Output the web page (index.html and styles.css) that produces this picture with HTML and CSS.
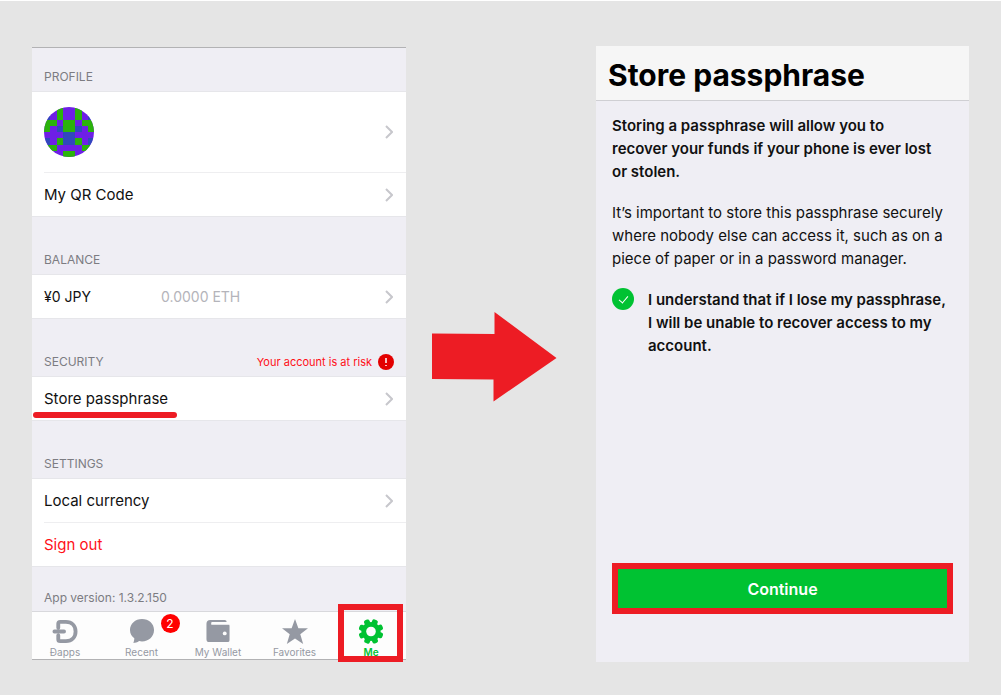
FILE: index.html
```html
<!DOCTYPE html>
<html lang="en">
<head>
    <meta charset="UTF-8">
    <meta name="viewport" content="width=device-width, initial-scale=1.0">
    <title>Store passphrase</title>
    <link rel="stylesheet" href="styles.css">
</head>
<body>
    <main class="guide">
        <!-- Step 1: account screen -->
        <section class="screen account">
            <h2 class="group-title">PROFILE</h2>
            <div class="group">
                <a href="#" class="row profile-row" aria-label="Profile">
                    <svg class="avatar" viewBox="0 0 8 8" shape-rendering="crispEdges">
                        <rect width="8" height="8" fill="#6e1fe6"/>
                        <path fill="#2bb30b" d="M2 0h1v2h-1zM5 0h1v2h-1zM0 2h2v1h-1v1h-1zM6 2h2v2h-1v-1h-1zM3 2h2v2h-2zM2 5h1v1h-1zM5 5h1v1h-1zM0 6h2v1h-2zM6 6h2v1h-2zM3 7h2v1h-2z"/>
                        <path fill="#3148bd" d="M0 1h1v1h-1zM7 1h1v1h-1zM2 3h1v1h-1zM5 3h1v1h-1zM3 4h2v2h-2zM0 5h1v1h-1zM7 5h1v1h-1z"/>
                    </svg>
                    <svg class="chevron" viewBox="0 0 8 14"><path d="M1 1l6 6-6 6"/></svg>
                </a>
                <a href="#" class="row">
                    <span>My QR Code</span>
                    <svg class="chevron" viewBox="0 0 8 14"><path d="M1 1l6 6-6 6"/></svg>
                </a>
            </div>

            <h2 class="group-title">BALANCE</h2>
            <div class="group">
                <a href="#" class="row balance-row">
                    <span class="fiat">¥0 JPY</span>
                    <span class="eth">0.0000 ETH</span>
                    <svg class="chevron" viewBox="0 0 8 14"><path d="M1 1l6 6-6 6"/></svg>
                </a>
            </div>

            <div class="group-title">
                <h2>SECURITY</h2>
                <span class="risk">Your account is at risk
                    <svg viewBox="0 0 16 16"><circle cx="8" cy="8" r="8" fill="#e30000"/><path d="M8 4v5M8 11v1" stroke="#fff" stroke-width="1.5"/></svg>
                </span>
            </div>
            <div class="group">
                <a href="#" class="row marked">
                    <span>Store passphrase</span>
                    <svg class="chevron" viewBox="0 0 8 14"><path d="M1 1l6 6-6 6"/></svg>
                </a>
            </div>

            <h2 class="group-title">SETTINGS</h2>
            <div class="group">
                <a href="#" class="row">
                    <span>Local currency</span>
                    <svg class="chevron" viewBox="0 0 8 14"><path d="M1 1l6 6-6 6"/></svg>
                </a>
                <a href="#" class="row sign-out">Sign out</a>
            </div>

            <p class="version">App version: 1.3.2.150</p>

            <nav class="tabs">
                <a href="#" class="tab">
                    <svg viewBox="0 0 28 26"><path d="M7 9V5q0-2 2-2h6c6 0 10 4 10 10s-4 10-10 10H9q-2 0-2-2v-4M3 13h10" fill="none" stroke="#9599a3" stroke-width="4" stroke-linecap="round"/></svg>
                    <span>Đapps</span>
                </a>
                <a href="#" class="tab">
                    <svg viewBox="0 0 28 26"><path d="M14 0C7 0 1.500 5 1.500 11.500c0 4 2 7 4.500 8.500 0 2-.5 3.500-1 5 2 0 4-.5 6-2 1 .3 2 .4 3 .4 7 0 12.500-5 12.500-11.900S21 0 14 0z" fill="#9599a3"/></svg>
                    <span>Recent</span>
                    <span class="badge">2</span>
                </a>
                <a href="#" class="tab">
                    <svg viewBox="0 0 28 26"><path d="M6 1h15q2 0 2 2H8q-1 0-1 1t1 1h16q2 0 2 2v15q0 2-2 2H5q-3 0-3-3V5q0-4 4-4z" fill="#9599a3"/><path d="M7 5h19" stroke="#fdfdfd" stroke-width="2"/><circle cx="21" cy="15" r="2" fill="#fdfdfd"/></svg>
                    <span>My Wallet</span>
                </a>
                <a href="#" class="tab">
                    <svg viewBox="0 0 28 26"><path d="M14 0l3.500 9.500H27.500l-8 6.300 3 10.200L14 20.200 5.500 26l3-10.200-8-6.300H10.500z" fill="#9599a3"/></svg>
                    <span>Favorites</span>
                </a>
                <a href="#" class="tab active">
                    <svg viewBox="0 0 28 26"><g fill="#00c232" transform="translate(14 13)"><rect x="-3" y="-13" width="6" height="26" rx="2" transform="rotate(22)"/><rect x="-3" y="-13" width="6" height="26" rx="2" transform="rotate(67)"/><rect x="-3" y="-13" width="6" height="26" rx="2" transform="rotate(112)"/><rect x="-3" y="-13" width="6" height="26" rx="2" transform="rotate(157)"/><circle r="10"/><circle r="5" fill="#fdfdfd"/></g></svg>
                    <span>Me</span>
                </a>
            </nav>
        </section>

        <div class="arrow">
            <svg viewBox="0 0 125 90"><path d="M0 21.500L62.500 22V0L124.500 46 61.500 89.500V67.500L0 67z" fill="#ed1c24"/></svg>
        </div>

        <!-- Step 2: passphrase screen -->
        <section class="screen passphrase">
            <header class="title-bar">
                <h1>Store passphrase</h1>
            </header>
            <div class="content">
                <p class="lead">Storing a passphrase will allow you to<br>recover your funds if your phone is ever lost<br>or stolen.</p>
                <p>It’s important to store this passphrase securely<br>where nobody else can access it, such as on a<br>piece of paper or in a password manager.</p>
                <div class="confirm">
                    <input type="checkbox" id="understand" checked>
                    <label for="understand">I understand that if I lose my passphrase,<br>I will be unable to recover access to my<br>account.</label>
                </div>
                <button type="button" class="continue">Continue</button>
            </div>
        </section>
    </main>
</body>
</html>
```
FILE: styles.css
```css
* {
    box-sizing: border-box;
}

body {
    margin: 0;
    background: #e5e5e5;
    color: #111;
    font-family: Inter, "Liberation Sans", sans-serif;
    font-size: 15px;
}

h1, h2, p {
    margin: 0;
}

a {
    color: inherit;
    text-decoration: none;
}

.guide {
    display: grid;
    grid-template-columns: 374fr 190fr 373fr;
    min-height: 100vh;
    padding: 45px 32px 33px;
    border-top: 1px solid #fff;
}

.screen {
    display: flex;
    flex-direction: column;
    background: #efeef4;
}

/* Account screen */
.account {
    margin: 1px 0 2px;
    border-top: 1px solid #b2b2b4;
    border-bottom: 1px solid #b2b2b4;
}

.group-title {
    display: flex;
    justify-content: space-between;
    align-items: flex-end;
    height: 57px;
    padding: 0 12px 6px;
    color: #7c7c82;
    font-size: 12px;
    font-weight: 400;
    line-height: 16px;
}

.group-title:first-child {
    height: 43px;
}

.group-title h2 {
    font-size: 12px;
    font-weight: 400;
}

.risk {
    display: flex;
    align-items: center;
    gap: 6px;
    color: #ff1018;
    font-size: 11px;
}

.risk svg {
    width: 16px;
    height: 16px;
}

.group {
    background: #fff;
    border-top: 1px solid #e6e6ea;
    border-bottom: 1px solid #e6e6ea;
}

.row {
    position: relative;
    display: flex;
    align-items: center;
    height: 43px;
    margin-left: 12px;
    padding-right: 13px;
}

.row + .row {
    height: 44px;
    border-top: 1px solid #eeeef0;
}

.profile-row {
    height: 80px;
}

.avatar {
    width: 50px;
    height: 50px;
    border-radius: 50%;
}

.chevron {
    width: 8px;
    height: 14px;
    margin-left: auto;
    fill: none;
    stroke: #c7c7cc;
    stroke-width: 2;
}

.balance-row {
    font-size: 14px;
}

.fiat {
    width: 117px;
}

.eth {
    color: #b4b4ba;
}

.marked::after {
    content: "";
    position: absolute;
    left: -11px;
    bottom: 2px;
    width: 144px;
    height: 6px;
    border-radius: 3px;
    background: #ed1c24;
}

.sign-out {
    color: #ff1018;
}

.version {
    flex: 1;
    padding: 23px 12px 5px;
    color: #7c7c82;
    font-size: 12px;
    line-height: 16px;
}

/* Tab bar */
.tabs {
    display: flex;
    justify-content: space-between;
    height: 48px;
    padding: 0 3px 0 1px;
    background: #fdfdfd;
    border-top: 1px solid #d8d8dc;
}

.tab {
    position: relative;
    display: flex;
    flex-direction: column;
    align-items: center;
    gap: 2px;
    width: 64px;
    padding-top: 7px;
    color: #9599a3;
    font-size: 10px;
    line-height: 12px;
    white-space: nowrap;
}

.tab svg {
    width: 28px;
    height: 25px;
}

.tab.active {
    color: #00c232;
    font-weight: 600;
}

.tab.active::after {
    content: "";
    position: absolute;
    inset: -8px 0 -3px -1px;
    border: 6px solid #ed1c24;
}

.badge {
    position: absolute;
    top: 2px;
    right: -6px;
    width: 19px;
    height: 19px;
    border-radius: 50%;
    background: #f00;
    color: #fff;
    font-size: 12px;
    line-height: 19px;
    text-align: center;
}

.arrow {
    display: flex;
    align-items: center;
    padding: 6px 0 0 26px;
}

.arrow svg {
    width: 125px;
    height: 90px;
}

/* Passphrase screen */
.title-bar {
    padding: 11px 12px 7px;
    background: #f6f6f6;
    border-bottom: 1px solid #cfcfd3;
}

.title-bar h1 {
    color: #000;
    font-size: 30px;
    font-weight: 700;
    line-height: 36px;
}

.content {
    display: flex;
    flex: 1;
    flex-direction: column;
    gap: 18px;
    padding: 13px 16px 48px;
    line-height: 23px;
}

.content .lead,
.confirm {
    font-weight: 600;
}

.confirm {
    display: flex;
    gap: 14px;
}

.confirm input {
    position: relative;
    flex: none;
    appearance: none;
    width: 22px;
    height: 22px;
    margin: 0;
    border-radius: 50%;
    background: #00c232;
}

.confirm input:checked::after {
    content: "";
    position: absolute;
    left: 9px;
    top: 6px;
    width: 4px;
    height: 8px;
    border: solid #fff;
    border-width: 0 1px 1px 0;
    transform: rotate(40deg);
}

.continue {
    height: 51px;
    margin-top: auto;
    border: 6px solid #ed1c24;
    background: #00c232;
    color: #fff;
    font-family: inherit;
    font-size: 16px;
    font-weight: 600;
    cursor: pointer;
}
```
